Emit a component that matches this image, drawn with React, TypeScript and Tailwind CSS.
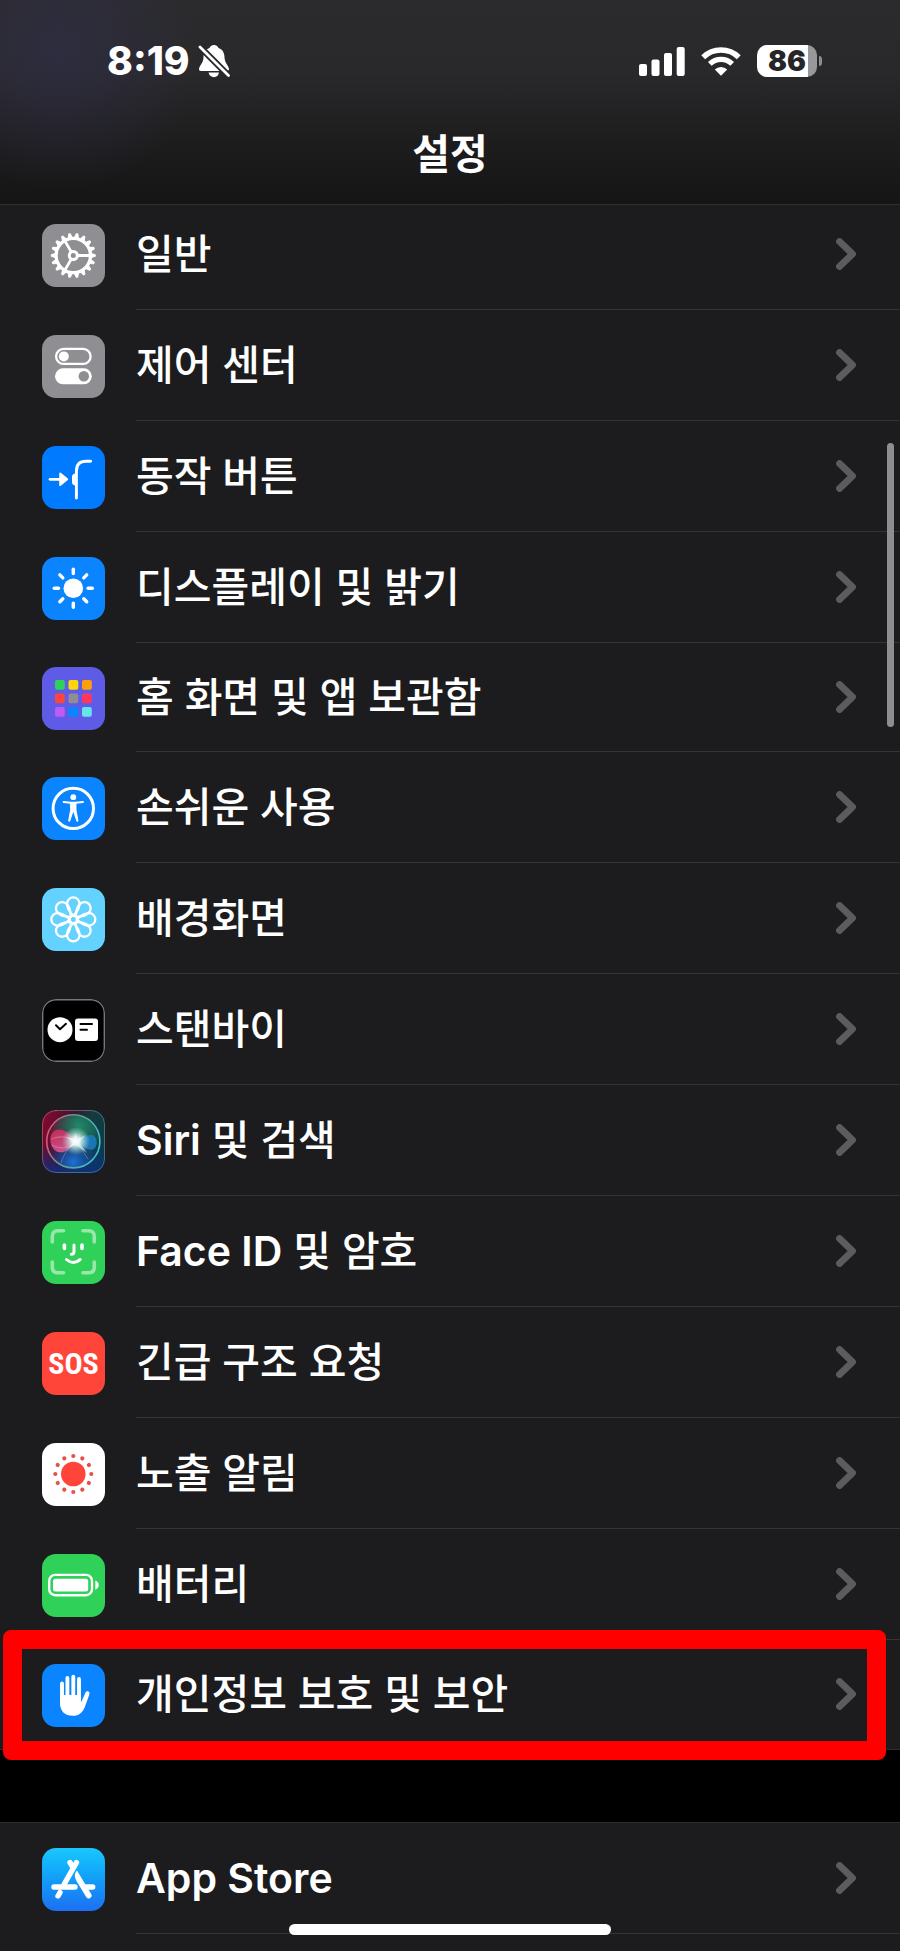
import type { ReactNode } from "react";

type Item = {
  latin?: string;
  label: string;
  tile: string;
  icon: ReactNode;
  compact?: boolean;
  highlighted?: boolean;
};

const GEAR_TEETH = Array.from({ length: 18 }, (_, i) => i * 20);
const PETALS = [0, 45, 90, 135, 180, 225, 270, 315];
const EXPOSURE_DOTS = Array.from({ length: 12 }, (_, i) => i * 30);
const APP_COLORS = [
  "#30d158",
  "#ffd60a",
  "#ff9f0a",
  "#ff453a",
  "#8e8e93",
  "#ff375f",
  "#bf5af2",
  "#0a84ff",
  "#66e5e8",
];

function Glyph({ children }: { children: ReactNode }) {
  return (
    <svg
      viewBox="0 0 63 63"
      fill="none"
      strokeLinecap="round"
      strokeLinejoin="round"
      className="size-full"
      aria-hidden="true"
    >
      {children}
    </svg>
  );
}

const Icons = {
  gear: (
    <Glyph>
      <g transform="translate(31.3 31.5)" stroke="#fff">
        <circle r="17.2" strokeWidth="3.3" />
        {GEAR_TEETH.map((a) => (
          <path
            key={a}
            d="M18 -2L22 -0.8V0.8L18 2Z"
            fill="#fff"
            strokeWidth="1"
            transform={`rotate(${a})`}
          />
        ))}
        <circle r="4" strokeWidth="3" />
        {[0, 120, 240].map((a) => (
          <path
            key={a}
            d="M5 0H17"
            strokeWidth="2.8"
            transform={`rotate(${a})`}
          />
        ))}
      </g>
    </Glyph>
  ),
  controls: (
    <Glyph>
      <rect
        x="14.1"
        y="13.9"
        width="34.5"
        height="15"
        rx="7.5"
        stroke="#fff"
        strokeWidth="2.3"
      />
      <circle cx="21.8" cy="21.4" r="5" fill="#fff" />
      <rect x="13" y="33.3" width="36.8" height="16" rx="8" fill="#fff" />
      <circle cx="41.8" cy="41.3" r="5.2" fill="#8e8e93" />
    </Glyph>
  ),
  action: (
    <Glyph>
      <path d="M8 33.3H18" stroke="#fff" strokeWidth="2.7" />
      <path
        d="M18.2 27.6L25.2 33.3L18.2 39Z"
        fill="#fff"
        stroke="#fff"
        strokeWidth="2"
      />
      <path
        d="M48.6 15.2H44Q34.4 15.2 34.4 25V52"
        stroke="#fff"
        strokeWidth="2.9"
      />
      <path
        d="M34.5 27.5C31 27.5 30 29 30 31V36C30 38 31 39.5 34.5 39.5Z"
        fill="#fff"
      />
    </Glyph>
  ),
  sun: (
    <Glyph>
      <g transform="translate(31.3 31.3)">
        <circle r="9.8" fill="#fff" />
        {PETALS.map((a) => (
          <path
            key={a}
            d="M0 -14.8V-19"
            stroke="#fff"
            strokeWidth="3.4"
            transform={`rotate(${a})`}
          />
        ))}
      </g>
    </Glyph>
  ),
  apps: (
    <Glyph>
      {APP_COLORS.map((color, i) => (
        <rect
          key={color}
          x={13 + (i % 3) * 13.5}
          y={13 + Math.floor(i / 3) * 13.5}
          width="9.8"
          height="9.8"
          rx="2"
          fill={color}
        />
      ))}
    </Glyph>
  ),
  accessibility: (
    <Glyph>
      <circle cx="31.3" cy="31.4" r="20.2" stroke="#fff" strokeWidth="3" />
      <circle cx="31.3" cy="20.2" r="2.9" fill="#fff" />
      <path
        d="M21.6 24.9L29 25.8H33.6L41 24.9"
        stroke="#fff"
        strokeWidth="2"
      />
      <path
        d="M28.6 25.5H34V33L36 44L35 44.5L31.8 35H30.8L27.6 44.5L26.6 44L28.6 33Z"
        fill="#fff"
        stroke="#fff"
        strokeWidth="0.9"
      />
    </Glyph>
  ),
  flower: (
    <Glyph>
      <g transform="translate(31.3 31.4)" stroke="#fff" strokeWidth="2.3">
        {PETALS.map((a) => (
          <path
            key={a}
            d="M0 -3.5C-3.5 -7 -6.2 -12 -6.2 -15.8A6.2 6.2 0 1 1 6.2 -15.8C6.2 -12 3.5 -7 0 -3.5Z"
            transform={`rotate(${a})`}
          />
        ))}
        <circle r="3.8" />
      </g>
    </Glyph>
  ),
  standby: (
    <Glyph>
      <rect
        x="0.7"
        y="0.7"
        width="61.6"
        height="61.6"
        rx="13.3"
        stroke="#77777b"
        strokeWidth="1.4"
      />
      <circle cx="18" cy="30.7" r="12.5" fill="#fff" />
      <path d="M14 26.3L18 30.2L24 24.8" stroke="#000" strokeWidth="2" />
      <rect x="33" y="19.5" width="23" height="22.5" rx="3" fill="#fff" />
      <path d="M38.5 25H50M38.5 30.7H45" stroke="#000" strokeWidth="2" />
    </Glyph>
  ),
  siri: (
    <Glyph>
      <defs>
        <linearGradient id="siri-bg" x1="0" y1="0.3" x2="1" y2="0.6">
          <stop offset="0" stopColor="#80092f" />
          <stop offset="0.4" stopColor="#371733" />
          <stop offset="0.65" stopColor="#153b3d" />
          <stop offset="1" stopColor="#0b3c47" />
        </linearGradient>
        <linearGradient id="siri-floor" x1="0" y1="0" x2="0" y2="1">
          <stop offset="0.55" stopColor="#0c2f86" stopOpacity="0" />
          <stop offset="1" stopColor="#0c2f86" stopOpacity="0.8" />
        </linearGradient>
        <linearGradient id="siri-ring" x1="0" y1="0.3" x2="1" y2="0.6">
          <stop offset="0" stopColor="#e8506f" />
          <stop offset="0.45" stopColor="#5f9f8b" />
          <stop offset="1" stopColor="#3fc0d8" />
        </linearGradient>
        <linearGradient id="siri-pink" x1="0" y1="0" x2="0.3" y2="1">
          <stop offset="0" stopColor="#d52a5c" />
          <stop offset="1" stopColor="#dd5a94" />
        </linearGradient>
        <radialGradient id="siri-green" cx="0.6" cy="0.2" r="0.6">
          <stop offset="0" stopColor="#1f8a68" />
          <stop offset="1" stopColor="#1f8a68" stopOpacity="0" />
        </radialGradient>
        <radialGradient id="siri-blue" cx="0.5" cy="0.9" r="0.5">
          <stop offset="0" stopColor="#1d72d8" />
          <stop offset="1" stopColor="#1d4f9a" stopOpacity="0" />
        </radialGradient>
        <radialGradient id="siri-glow">
          <stop offset="0" stopColor="#fff" />
          <stop offset="0.3" stopColor="#e4fffb" stopOpacity="0.9" />
          <stop offset="1" stopColor="#b9e6e0" stopOpacity="0" />
        </radialGradient>
      </defs>
      <rect width="63" height="63" fill="url(#siri-bg)" />
      <rect width="63" height="63" fill="url(#siri-floor)" />
      <circle cx="31.3" cy="31.3" r="26" fill="url(#siri-green)" />
      <circle cx="31.3" cy="31.3" r="26" fill="url(#siri-blue)" />
      <path
        d="M34 31C28 23 22 19 16 19.5C9 20.5 7 28 9 34C11 41 17 44 23 41.5C28 39 31 34 34 31Z"
        fill="url(#siri-pink)"
        fillOpacity="0.85"
      />
      <path
        d="M35 31C40 28 45 24.5 50 25C55 26 56 34 53 38C49 42 43 39 35 31Z"
        fill="#1a7fcc"
        fillOpacity="0.8"
      />
      <path
        d="M19 53C22 43 27 37 34 31L46 49"
        stroke="#79a8e8"
        strokeOpacity="0.5"
      />
      <path
        d="M10 29C18 25 27 27 35 31C30 37 18 41 10 35"
        stroke="#ff9db4"
        strokeOpacity="0.5"
      />
      <circle cx="34" cy="31" r="14" fill="url(#siri-glow)" />
      <path
        d="M33.5 23L35 29L44 25L37 32L45 43L34 35L27 38L31 32L24 27L32 29Z"
        fill="#fff"
        fillOpacity="0.5"
      />
      <circle
        cx="31.3"
        cy="31.3"
        r="26.6"
        stroke="url(#siri-ring)"
        strokeWidth="1.6"
      />
      <rect
        x="0.5"
        y="0.5"
        width="62"
        height="62"
        rx="13.5"
        stroke="#fff"
        strokeOpacity="0.25"
      />
    </Glyph>
  ),
  face: (
    <Glyph>
      <path
        d="M10.3 21V15.5Q10.3 9.7 16 9.7H21.5M41 9.7H46.5Q52.3 9.7 52.3 15.5V21M52.3 41V46Q52.3 51.8 46.5 51.8H41M21.5 51.8H16Q10.3 51.8 10.3 46V41"
        stroke="#98e8ab"
        strokeWidth="3.6"
      />
      <path d="M22.4 24V27.5M40 24V27.5" stroke="#fff" strokeWidth="3.6" />
      <path
        d="M32 24V30.5Q32 33.3 29.3 33.3M24.5 38.5Q31.3 44.5 38.2 38.5"
        stroke="#fff"
        strokeWidth="3"
      />
    </Glyph>
  ),
  exposure: (
    <Glyph>
      <circle cx="31.3" cy="31" r="12.3" fill="#ff453a" />
      {EXPOSURE_DOTS.map((a) => (
        <circle
          key={a}
          cx="31.3"
          cy="13"
          r="2.1"
          fill="#e4514a"
          transform={`rotate(${a} 31.3 31)`}
        />
      ))}
    </Glyph>
  ),
  battery: (
    <Glyph>
      <rect
        x="7.2"
        y="20.9"
        width="42.8"
        height="20.3"
        rx="6"
        stroke="#fff"
        strokeWidth="2.4"
      />
      <rect x="11" y="24.7" width="35.2" height="12.7" rx="2.5" fill="#fff" />
      <path d="M53.3 26.5Q56.7 28 56.7 31T53.3 35.7Z" fill="#fff" />
    </Glyph>
  ),
  hand: (
    <Glyph>
      <path
        d="M20 19.5V40M25.4 14V34M31.3 12.7V34M37 15V36"
        stroke="#fff"
        strokeWidth="3.9"
      />
      <path
        d="M18 31H39V38.5L43.5 28.5C44.5 26.5 48 27 47.5 30L43.2 42C41 48.5 37 51.8 31 51.8C22.5 51.8 18 47 18 39Z"
        fill="#fff"
      />
    </Glyph>
  ),
  appStore: (
    <Glyph>
      <path
        d="M34.5 14.5L22 36.5M28 14.5L30 18M18 44.5L16 48M12 39H33M43.5 39H50.7"
        stroke="#fff"
        strokeWidth="5.4"
      />
      <path
        d="M35 22.5C32 26 32.5 29 34.5 33L44.5 49.5C46.5 52 50.5 49.5 49.5 46.5Z"
        fill="#fff"
      />
    </Glyph>
  ),
};

const MAIN_ITEMS: Item[] = [
  { label: "일반", tile: "bg-[#8e8e93]", icon: Icons.gear },
  { label: "제어 센터", tile: "bg-[#8e8e93]", icon: Icons.controls },
  { label: "동작 버튼", tile: "bg-[#007aff]", icon: Icons.action },
  { label: "디스플레이 및 밝기", tile: "bg-[#0a84ff]", icon: Icons.sun },
  {
    label: "홈 화면 및 앱 보관함",
    tile: "bg-[#5e5ce6]",
    icon: Icons.apps,
    compact: true,
  },
  { label: "손쉬운 사용", tile: "bg-[#0a84ff]", icon: Icons.accessibility },
  { label: "배경화면", tile: "bg-[#64d2ff]", icon: Icons.flower },
  { label: "스탠바이", tile: "bg-black", icon: Icons.standby },
  {
    latin: "Siri",
    label: " 및 검색",
    tile: "bg-[#153b3d]",
    icon: Icons.siri,
  },
  {
    latin: "Face ID",
    label: " 및 암호",
    tile: "bg-[#30d158]",
    icon: Icons.face,
  },
  {
    label: "긴급 구조 요청",
    tile: "bg-[#ff453a]",
    icon: (
      <span
        aria-hidden="true"
        className="font-['Liberation_Sans_Narrow','Roboto_Condensed','DejaVu_Sans_Condensed',sans-serif] text-[30px] leading-none font-bold"
      >
        SOS
      </span>
    ),
  },
  { label: "노출 알림", tile: "bg-white", icon: Icons.exposure },
  { label: "배터리", tile: "bg-[#30d158]", icon: Icons.battery },
  {
    label: "개인정보 보호 및 보안",
    tile: "bg-[#0a84ff]",
    icon: Icons.hand,
    compact: true,
    highlighted: true,
  },
];

const STORE_ITEMS: Item[] = [
  {
    latin: "App Store",
    label: "",
    tile: "bg-linear-to-b from-[#1bc8fc] to-[#1d6ff2]",
    icon: Icons.appStore,
  },
];

function StatusBar() {
  return (
    <div className="flex h-[42px] items-center justify-between pr-[78px] pl-[107px]">
      <div className="flex items-center gap-2">
        <time className="text-[39px] leading-10 font-extrabold">8:19</time>
        <svg
          viewBox="0 0 32 34"
          className="h-[34px] w-8"
          role="img"
          aria-label="무음 모드"
        >
          <path
            d="M16 1C18.5 1 20 2.5 20.5 4C25 5.5 26.500 9.5 26.5 13.5C26.8 19 30.5 21.5 31 25C31 26.5 30 27 28.5 27H3C1.5 27 1 26 1 25C1.5 21.5 5.2 19 5.5 13.5C5.5 9.5 7 5.5 11.5 4C12 2.5 13.5 1 16 1Z"
            fill="#fff"
          />
          <path
            d="M10.5 28.6H21C20.5 31.5 18.5 33.2 16 33.2S11 31.5 10.5 28.6Z"
            fill="#fff"
          />
          <path d="M-1 0L33 34" stroke="#28282d" strokeWidth="6.5" />
          <path
            d="M2 3L30.5 31.5"
            stroke="#fff"
            strokeWidth="2.8"
            strokeLinecap="round"
          />
        </svg>
      </div>
      <div className="flex items-center gap-4">
        <svg
          viewBox="0 0 46 30"
          className="h-[30px] w-[46px]"
          fill="#fff"
          role="img"
          aria-label="신호 세기"
        >
          <rect x="0" y="18" width="8" height="12" rx="2" />
          <rect x="12.5" y="13.5" width="8" height="16.5" rx="2" />
          <rect x="25" y="7" width="8" height="23" rx="2" />
          <rect x="37.7" y="1" width="8" height="29" rx="2" />
        </svg>
        <svg
          viewBox="0 0 40 30"
          className="h-[30px] w-10"
          fill="none"
          stroke="#fff"
          role="img"
          aria-label="Wi-Fi"
        >
          <path
            d="M2.2 11.2A25.5 25.5 0 0 1 37.8 11.2"
            strokeWidth="5.5"
          />
          <path
            d="M8.8 17.9A16 16 0 0 1 31.2 17.9"
            strokeWidth="5.2"
          />
          <path
            d="M20 29.8L13.8 23.6A8.8 8.8 0 0 1 26.2 23.6Z"
            fill="#fff"
            stroke="none"
          />
        </svg>
        <div className="flex items-center gap-0.5">
          <div className="flex h-8 w-[60px] items-center justify-center rounded-[10px] bg-linear-to-r from-white from-85% to-[#98989a] to-85% text-[28px] leading-8 font-black text-[#262628]">
            86
          </div>
          <div className="h-2.5 w-[3px] rounded-r-full bg-[#8e8e90]" />
        </div>
      </div>
    </div>
  );
}

function Row({ item, last }: { item: Item; last?: boolean }) {
  return (
    <li className="relative">
      <a
        href="#"
        className={`flex items-center gap-[31px] pl-[42px] ${
          item.compact ? "h-[109px]" : "h-[111px]"
        }`}
      >
        <span
          className={`mt-0.5 flex size-[63px] shrink-0 items-center justify-center overflow-hidden rounded-[14px] ${item.tile}`}
        >
          {item.icon}
        </span>
        <span
          className={`flex h-full flex-1 items-center justify-between border-b pr-11 ${
            last ? "border-transparent" : "border-[#343436]"
          }`}
        >
          <span className="text-[41px] leading-12 font-medium">
            {item.latin && <span className="font-semibold">{item.latin}</span>}
            {item.label}
          </span>
          <svg
            viewBox="0 0 20 32"
            className="h-8 w-5"
            fill="none"
            stroke="#5b5b60"
            strokeWidth="6.8"
            strokeLinecap="round"
            strokeLinejoin="round"
            aria-hidden="true"
          >
            <path d="M3.5 3.5L16.500 16L3.5 28.5" />
          </svg>
        </span>
      </a>
      {item.highlighted && (
        <div className="pointer-events-none absolute -top-2.5 right-3.5 -bottom-[11px] left-[3px] z-10 rounded-lg border-[19px] border-[#ff0000]" />
      )}
    </li>
  );
}

export default function App() {
  return (
    <div className="relative flex min-h-screen flex-col bg-black font-['Inter','Noto_Sans_CJK_KR',sans-serif] text-white">
      <header className="relative z-10 border-b border-[#303032] bg-[radial-gradient(circle_at_60px_50px,rgb(48,46,72,0.7),transparent_140px),linear-gradient(to_bottom,#2b2b2d,#29292b_35%,#1d1d1e_70%,#151515)] pt-10 pb-[26px]">
        <StatusBar />
        <h1 className="mt-12 text-center text-[41px] leading-12 font-bold">
          설정
        </h1>
      </header>

      <main className="flex flex-1 flex-col">
        {/* first row is scrolled slightly under the header */}
        <ul className="-mt-1.5 border-b border-[#2c2c2e] bg-[#1c1c1e]">
          {MAIN_ITEMS.map((item, i) => (
            <Row
              key={item.icon ? item.label : i}
              item={item}
              last={i === MAIN_ITEMS.length - 1}
            />
          ))}
        </ul>
        <ul className="mt-18 flex-1 border-t border-[#2c2c2e] bg-[#1c1c1e] pb-4">
          {STORE_ITEMS.map((item) => (
            <Row key={item.latin} item={item} />
          ))}
        </ul>
      </main>

      {/* scroll thumb */}
      <div className="absolute top-[443px] right-1.5 h-[284px] w-[7px] rounded-full bg-[#8e8e90]" />
      {/* home indicator */}
      <div className="absolute bottom-4 left-1/2 h-[11px] w-[322px] -translate-x-1/2 rounded-full bg-white" />
    </div>
  );
}
